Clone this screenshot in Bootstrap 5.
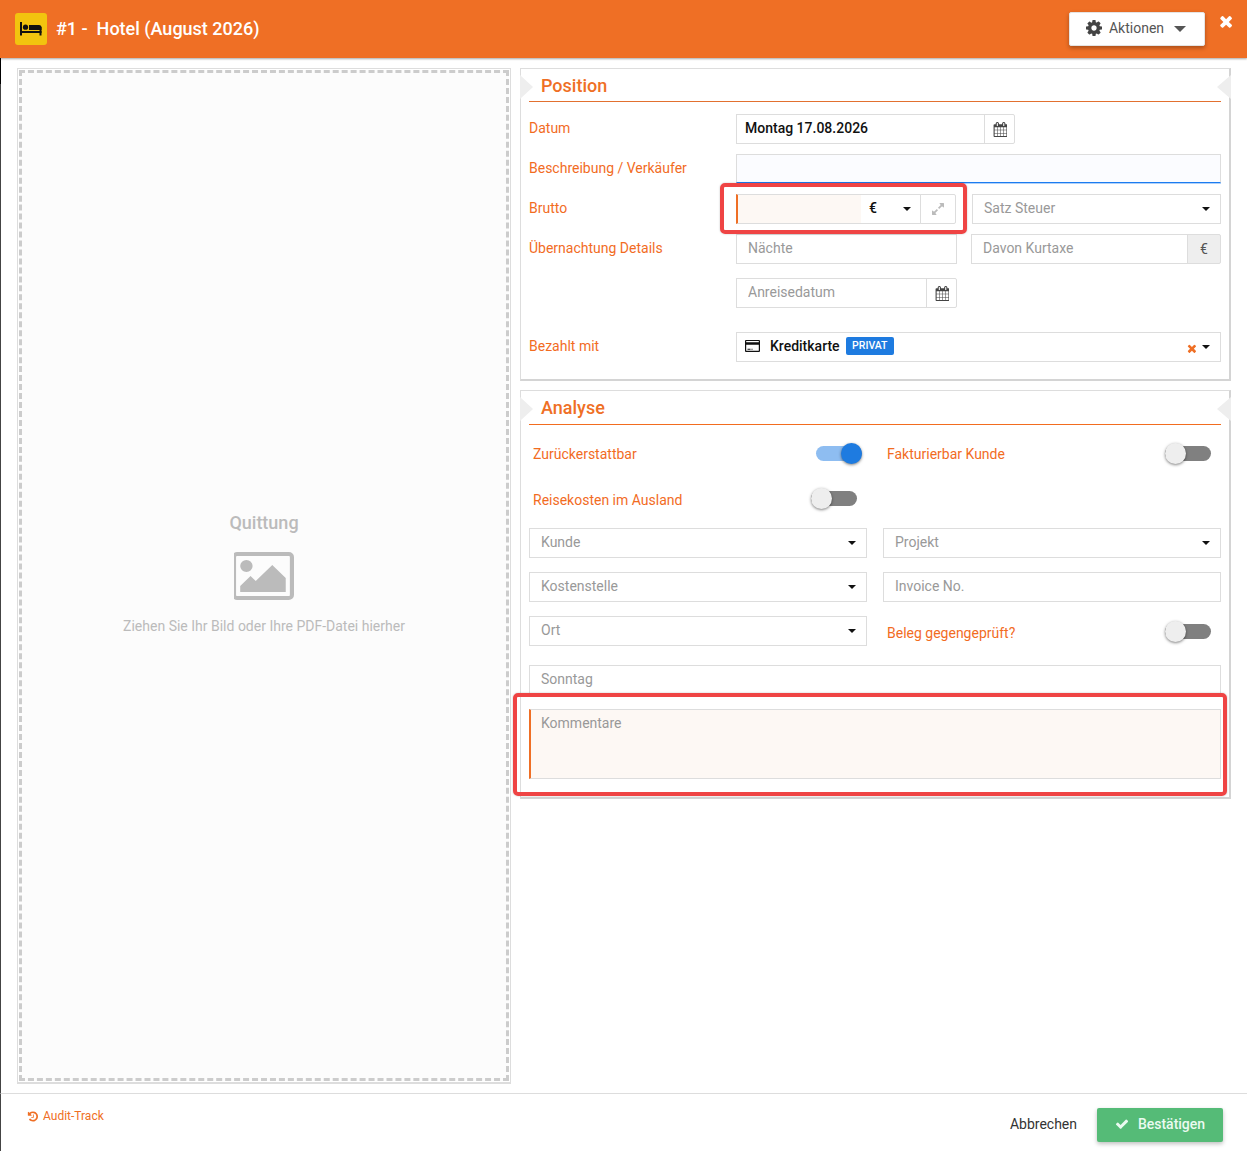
<!DOCTYPE html>
<html lang="de">
<head>
<meta charset="UTF-8" />
<title>Hotel</title>
<link rel="stylesheet" href="https://cdn.jsdelivr.net/npm/bootstrap@5.3.0/dist/css/bootstrap.min.css" />
<style>
body { font-family: Roboto, "Liberation Sans", sans-serif; font-size: 14px; color: #333; background: #fff; }
.top-bar { height: 58px; background: #ef6f25; color: #fff; box-shadow: 0 1px 2px rgba(0,0,0,.35); padding: 0 15px; z-index: 2; flex: none; }
.top-icon { width: 32px; height: 32px; background: #f2c40f; border-radius: 3px; }
.top-title { font-size: 18px; font-weight: 500; margin: 0 0 0 9px; white-space: pre; }
.action-btn { width: 136px; height: 34px; background: #fff; color: #555; font-size: 14px; border: 1px solid #e4e4e4; border-radius: 2px; box-shadow: 0 2px 4px rgba(0,0,0,.3); margin-left: auto; margin-right: 14px; gap: 7px; padding: 0 2px 2px 0; }
.action-caret { width: 0; height: 0; border-left: 6px solid transparent; border-right: 6px solid transparent; border-top: 6px solid #555; margin-left: 3px; margin-top: 2px; }
.close-x { margin: -15px 0 0 0; line-height: 0; }
.work { border-left: 1px solid #444; border-image: linear-gradient(#000 27px, #444 27px) 1; padding: 10px 16px 9px 16px; gap: 9px; min-height: 0; }
.drop-outer { width: 494px; flex: none; border: 1px solid #ddd; border-bottom-width: 2px; padding: 1px; }
.drop-zone { height: 100%; border: 3px dashed #ccc; background: #fcfcfc; color: #bbb; padding-bottom: 3px; }
.drop-title { font-size: 18px; font-weight: 500; line-height: 24px; margin-bottom: 17px; }
.drop-text { line-height: 21px; margin-top: 16px; }
.side { flex: 1 1 0; min-width: 0; gap: 9px; }
.pane { position: relative; border: 1px solid #ddd; border-right: 2px solid #d4d4d4; border-bottom: 2px solid #d4d4d4; padding: 0 8px; background: #fff; }
.pane::before, .pane::after { content: ""; position: absolute; top: 6px; width: 0; height: 0; border-top: 12px solid transparent; border-bottom: 12px solid transparent; }
.pane::before { left: -1px; border-left: 13px solid #eee; }
.pane::after { right: -2px; border-right: 14px solid #eee; }
.pane-title { height: 33px; border-bottom: 1px solid #e2702f; color: #ef6f25; font-size: 18px; font-weight: 500; line-height: 33px; padding-left: 12px; margin: 0; }
.pane-title.tall { height: 34px; line-height: 33px; border-bottom-color: #f26c1f; }
.pos-body { padding: 12px 0 17px; }
.ana-body { padding: 13px 0 18px; }
.line { min-height: 30px; margin-bottom: 10px; }
.line-wide { margin-bottom: 14px; }
.line-last { margin-bottom: 0; }
.lbl { color: #f26c1f; width: 207px; flex: none; padding-bottom: 2px; margin: 0; }
.lbl-text { color: #f26c1f; padding-top: 2px; }
.lbl-low { padding-top: 4px; }
.fld.form-control, .pick.btn { height: 30px; border: 1px solid #ddd; border-radius: 0; font-size: 14px; padding: 0 11px 2px; background-color: #fff; box-shadow: none; color: #111; }
.fld::placeholder { color: #999; opacity: 1; }
.pick.btn { color: #999; text-align: left; font-weight: 400; padding-right: 10px; }
.pick.dropdown-toggle::after { margin: 2px 0 0 auto; color: #111; }
.pick-strong.btn { padding: 0 10px 2px 8px; color: #111; font-weight: 500; gap: 6px; }
.pick-strong.dropdown-toggle::after { margin-left: 0; }
.val-date.form-control { padding-left: 8px; font-weight: 500; color: #111; }
.fld.form-control.desc-field { height: 29px; margin-bottom: 1px; background-color: #fbfcff; border-bottom: 1px solid #1b7cf0; box-shadow: 0 1px 0 rgba(27,124,240,.35); }
.marked.form-control { background-color: #fdf8f4; border-left: 2px solid #ef6f25; }
.add-on { height: 30px; width: 31px; padding: 0; justify-content: center; background: #fff; border: 1px solid #ddd; border-radius: 0 2px 2px 0; color: #444; font-size: 14px; }
.add-on.grey { width: 34px; background: #eee; color: #555; }
.cur-pick { width: 60px; height: 30px; padding: 0 9px 2px 8px; background: #fff; border: 1px solid #ddd; border-left: 0; border-radius: 0; font-size: 14px; font-weight: 500; color: #111; }
.cur-pick::after { margin: 2px 0 0 auto; }
.grow-btn { width: 36px; height: 30px; padding: 0; justify-content: center; background: #fff; border: 1px solid #ddd; border-radius: 0 2px 2px 0; }
.w-brutto { width: 220px; flex: none; }
.w-naechte { width: 221px; flex: none; }
.w-datum { width: 279px; }
.kurtaxe-gap { margin-left: 14px; }
.priv-tag.badge { background: #1e7be0; color: #fff; font-size: 10.5px; font-weight: 500; border-radius: 2px; padding: 3.500px 6.500px; margin-top: 2px; }
.half { width: calc(50% - 8px); flex: none; }
.tog-row { height: 30px; padding: 0 10px 0 4px; }
.tog-row.tog-on { padding-right: 5px; }
.tog-gap1 { margin-bottom: 16px; }
.tog-gap2 { margin-bottom: 14px; }
.slide { display: block; position: relative; width: 46px; height: 15px; border-radius: 8px; background: #808080; }
.slide::after { content: ""; position: absolute; top: -3px; left: 0; width: 21px; height: 21px; border-radius: 50%; background: #eee; box-shadow: 0 1px 3px rgba(0,0,0,.5); }
.slide.slide-on { background: #8ebdf1; }
.slide.slide-on::after { left: auto; right: 0; background: #1e7be0; }
.slide-up { margin-bottom: 2px; }
.note-wrap { position: relative; }
.note-box { position: absolute; border: 4px solid #ef4444; border-radius: 5px; pointer-events: none; box-shadow: 0 0 2px rgba(0,0,0,.25); z-index: 3; }
.note-brutto { left: -16px; right: -11px; top: -11px; bottom: -10px; }
.note-comment { left: -16px; right: -6px; top: -16px; bottom: -17px; }
.comment.form-control { display: block; height: 70px; border: 1px solid #ddd; border-left: 2px solid #ef6f25; border-radius: 0; background: #fdf8f4; font-size: 14px; padding: 3px 10px; box-shadow: none; resize: none; }
.comment::placeholder { color: #999; opacity: 1; }
.sun-field { margin: 19px 0 14px; }
.bottom-bar { height: 58px; flex: none; border-top: 1px solid #ddd; border-left: 1px solid #444; padding: 14px 24px 0 26px; }
.audit { color: #ef6f25; font-size: 12px; line-height: 17px; text-decoration: none; gap: 5px; }
.cancel-btn.btn { color: #333; font-size: 14px; border: 0; padding: 0 0 2px; margin-right: 20px; height: 34px; }
.ok-btn.btn { width: 126px; height: 34px; padding: 0 0 2px; background: #55bb77; color: #eafaf0; border: 0; border-radius: 2px; font-size: 14px; font-weight: 500; box-shadow: 0 2px 4px rgba(0,0,0,.25); gap: 9px; }
</style>
</head>
<body class="vh-100 d-flex flex-column overflow-hidden">

<header class="top-bar d-flex align-items-center">
    <span class="top-icon d-flex align-items-center justify-content-center">
        <svg width="22" height="14" viewBox="0 0 22 14" fill="#111"><rect x="0" y="0" width="2" height="13.5"/><rect x="0" y="9" width="21.5" height="2"/><rect x="19.5" y="5" width="2" height="8.5"/><circle cx="5.5" cy="5.2" r="2.6"/><path d="M9 3h10q2.500 0 2.500 2.500V8H9z"/></svg>
    </span>
    <h1 class="top-title">#1 -  Hotel (August 2026)</h1>
    <button type="button" class="btn action-btn d-flex align-items-center justify-content-center">
        <svg width="16" height="16" viewBox="128 128 1536 1536" fill="#444"><path d="M1152 896q0-106-75-181t-181-75-181 75-75 181 75 181 181 75 181-75 75-181zm512-109v222q0 12-8 23t-20 13l-185 28q-19 54-39 91 35 50 107 138 10 12 10 25t-9 23q-27 37-99 108t-94 71q-12 0-26-9l-138-108q-44 23-91 38-16 136-29 186-7 28-36 28h-222q-14 0-24.500-8.500t-11.500-21.500l-28-184q-49-16-90-37l-141 107q-10 9-25 9-14 0-25-11-126-114-165-168-7-10-7-23 0-12 8-23 15-21 51-66.500t54-70.500q-27-50-41-99l-183-27q-13-2-21-12.500t-8-23.500v-222q0-12 8-23t19-13l186-28q14-46 39-92-40-57-107-138-10-12-10-24 0-10 9-23 26-36 98.500-107.500t94.500-71.500q13 0 26 10l138 107q44-23 91-38 16-136 29-186 7-28 36-28h222q14 0 24.500 8.500t11.500 21.500l28 184q49 16 90 37l142-107q9-9 24-9 13 0 25 10 129 119 165 170 7 8 7 22 0 12-8 23-15 21-51 66.500t-54 70.500q26 50 41 98l183 28q13 2 21 12.500t8 23.500z"/></svg>
        Aktionen
        <span class="action-caret"></span>
    </button>
    <span class="close-x">
        <svg width="13" height="13" viewBox="180 260 1310 1310" fill="#fff"><path d="M1490 1322q0 40-28 68l-136 136q-28 28-68 28t-68-28l-294-294-294 294q-28 28-68 28t-68-28l-136-136q-28-28-28-68t28-68l294-294-294-294q-28-28-28-68t28-68l136-136q28-28 68-28t68 28l294 294 294-294q28-28 68-28t68 28l136 136q28 28 28 68t-28 68l-294 294 294 294q28 28 28 68z"/></svg>
    </span>
</header>

<main class="work flex-grow-1 d-flex">
    <div class="drop-outer">
        <div class="drop-zone d-flex flex-column align-items-center justify-content-center">
            <div class="drop-title">Quittung</div>
            <svg width="60" height="48" viewBox="0 128 1856 1536" preserveAspectRatio="none" fill="#bbb"><path d="M576 576q0 80-56 136t-136 56-136-56-56-136 56-136 136-56 136 56 56 136zm1024 384v448h-1408v-192l320-320 160 160 512-512zm96-704h-1600q-13 0-22.500 9.500t-9.500 22.500v1216q0 13 9.500 22.500t22.500 9.500h1600q13 0 22.500-9.500t9.500-22.500v-1216q0-13-9.500-22.500t-22.500-9.500zm160 32v1216q0 66-47 113t-113 47h-1600q-66 0-113-47t-47-113v-1216q0-66 47-113t113-47h1600q66 0 113 47t47 113z"/></svg>
            <div class="drop-text">Ziehen Sie Ihr Bild oder Ihre PDF-Datei hierher</div>
        </div>
    </div>

    <div class="side d-flex flex-column">
        <section class="pane">
            <h2 class="pane-title">Position</h2>
            <div class="pos-body">
                <div class="line d-flex align-items-center">
                    <label class="lbl">Datum</label>
                    <div class="input-group flex-nowrap w-datum">
                        <input type="text" class="form-control fld val-date" value="Montag 17.08.2026" />
                        <span class="input-group-text add-on">
                            <svg width="14" height="15" viewBox="0 0 1664 1792" fill="#444"><path d="M192 1664h288v-288h-288v288zm352 0h320v-288h-320v288zm-352-352h288v-320h-288v320zm352 0h320v-320h-320v320zm-352-384h288v-288h-288v288zm736 736h320v-288h-320v288zm-384-736h320v-288h-320v288zm768 736h288v-288h-288v288zm-384-352h320v-320h-320v320zm-352-864v-288q0-13-9.500-22.500t-22.500-9.500h-64q-13 0-22.500 9.500t-9.500 22.500v288q0 13 9.500 22.500t22.500 9.500h64q13 0 22.500-9.500t9.500-22.500zm736 864h288v-320h-288v320zm-384-384h320v-288h-320v288zm384 0h288v-288h-288v288zm32-480v-288q0-13-9.500-22.500t-22.500-9.500h-64q-13 0-22.500 9.500t-9.500 22.500v288q0 13 9.500 22.500t22.500 9.500h64q13 0 22.500-9.500t9.500-22.500zm384-64v1280q0 52-38 90t-90 38h-1408q-52 0-90-38t-38-90v-1280q0-52 38-90t90-38h128v-96q0-66 47-113t113-47h64q66 0 113 47t47 113v96h384v-96q0-66 47-113t113-47h64q66 0 113 47t47 113v96h128q52 0 90 38t38 90z"/></svg>
                        </span>
                    </div>
                </div>
                <div class="line d-flex align-items-center">
                    <label class="lbl">Beschreibung / Verkäufer</label>
                    <input type="text" class="form-control fld desc-field" />
                </div>
                <div class="line d-flex align-items-center">
                    <label class="lbl">Brutto</label>
                    <div class="w-brutto note-wrap">
                        <div class="input-group flex-nowrap">
                            <input type="text" class="form-control fld marked" />
                            <button type="button" class="btn dropdown-toggle cur-pick d-flex align-items-center">€</button>
                            <button type="button" class="btn grow-btn d-flex align-items-center">
                                <svg width="14" height="14" viewBox="0 0 1792 1792" fill="#bbb"><path d="M883 1056q0 13-10 23l-332 332 144 144q19 19 19 45t-19 45-45 19h-448q-26 0-45-19t-19-45v-448q0-26 19-45t45-19 45 19l144 144 332-332q10-10 23-10t23 10l114 114q10 10 10 23zm781-864v448q0 26-19 45t-45 19-45-19l-144-144-332 332q-10 10-23 10t-23-10l-114-114q-10-10-10-23t10-23l332-332-144-144q-19-19-19-45t19-45 45-19h448q26 0 45 19t19 45z"/></svg>
                            </button>
                        </div>
                        <div class="note-box note-brutto"></div>
                    </div>
                    <button type="button" class="btn pick dropdown-toggle d-flex align-items-center flex-grow-1 ms-3">Satz Steuer</button>
                </div>
                <div class="line line-wide d-flex align-items-center">
                    <label class="lbl">Übernachtung Details</label>
                    <input type="text" class="form-control fld w-naechte" placeholder="Nächte" />
                    <div class="input-group flex-nowrap kurtaxe-gap">
                        <input type="text" class="form-control fld" placeholder="Davon Kurtaxe" />
                        <span class="input-group-text add-on grey">€</span>
                    </div>
                </div>
                <div class="line d-flex align-items-center">
                    <span class="lbl"></span>
                    <div class="input-group flex-nowrap w-naechte">
                        <input type="text" class="form-control fld" placeholder="Anreisedatum" />
                        <span class="input-group-text add-on">
                            <svg width="14" height="15" viewBox="0 0 1664 1792" fill="#444"><path d="M192 1664h288v-288h-288v288zm352 0h320v-288h-320v288zm-352-352h288v-320h-288v320zm352 0h320v-320h-320v320zm-352-384h288v-288h-288v288zm736 736h320v-288h-320v288zm-384-736h320v-288h-320v288zm768 736h288v-288h-288v288zm-384-352h320v-320h-320v320zm-352-864v-288q0-13-9.500-22.500t-22.500-9.500h-64q-13 0-22.500 9.500t-9.500 22.500v288q0 13 9.500 22.500t22.500 9.500h64q13 0 22.500-9.500t9.500-22.500zm736 864h288v-320h-288v320zm-384-384h320v-288h-320v288zm384 0h288v-288h-288v288zm32-480v-288q0-13-9.500-22.500t-22.500-9.500h-64q-13 0-22.500 9.500t-9.500 22.500v288q0 13 9.500 22.500t22.500 9.500h64q13 0 22.500-9.500t9.500-22.500zm384-64v1280q0 52-38 90t-90 38h-1408q-52 0-90-38t-38-90v-1280q0-52 38-90t90-38h128v-96q0-66 47-113t113-47h64q66 0 113 47t47 113v96h384v-96q0-66 47-113t113-47h64q66 0 113 47t47 113v96h128q52 0 90 38t38 90z"/></svg>
                        </span>
                    </div>
                </div>
                <div class="line line-last d-flex align-items-center mt-4">
                    <label class="lbl">Bezahlt mit</label>
                    <button type="button" class="btn pick pick-strong dropdown-toggle d-flex align-items-center flex-grow-1">
                        <svg width="15" height="12" viewBox="0 0 15 12" class="me-1"><path fill="#111" fill-rule="evenodd" d="M1 0h13a1 1 0 0 1 1 1v10a1 1 0 0 1-1 1H1a1 1 0 0 1-1-1V1a1 1 0 0 1 1-1zm.2 1v1.200h12.600V1zm0 3.800v6h12.600v-6zM2.500 8.700h3v1h-3zm4 0h1v1h-1z"/></svg>
                        Kreditkarte
                        <span class="badge priv-tag">PRIVAT</span>
                        <svg width="9" height="9" viewBox="180 260 1310 1310" fill="#ef6f25" class="ms-auto mt-1"><path d="M1490 1322q0 40-28 68l-136 136q-28 28-68 28t-68-28l-294-294-294 294q-28 28-68 28t-68-28l-136-136q-28-28-28-68t28-68l294-294-294-294q-28-28-28-68t28-68l136-136q28-28 68-28t68 28l294 294 294-294q28-28 68-28t68 28l136 136q28 28 28 68t-28 68l-294 294 294 294q28 28 28 68z"/></svg>
                    </button>
                </div>
            </div>
        </section>

        <section class="pane">
            <h2 class="pane-title tall">Analyse</h2>
            <div class="ana-body">
                <div class="d-flex gap-3 tog-gap1">
                    <div class="half tog-row tog-on d-flex align-items-center justify-content-between">
                        <span class="lbl-text">Zurückerstattbar</span>
                        <span class="slide slide-on"></span>
                    </div>
                    <div class="half tog-row d-flex align-items-center justify-content-between">
                        <span class="lbl-text">Fakturierbar Kunde</span>
                        <span class="slide"></span>
                    </div>
                </div>
                <div class="d-flex gap-3 tog-gap2">
                    <div class="half tog-row d-flex align-items-center justify-content-between">
                        <span class="lbl-text">Reisekosten im Ausland</span>
                        <span class="slide slide-up"></span>
                    </div>
                </div>
                <div class="d-flex gap-3 line line-wide">
                    <button type="button" class="btn pick dropdown-toggle half d-flex align-items-center">Kunde</button>
                    <button type="button" class="btn pick dropdown-toggle half d-flex align-items-center">Projekt</button>
                </div>
                <div class="d-flex gap-3 line line-wide">
                    <button type="button" class="btn pick dropdown-toggle half d-flex align-items-center">Kostenstelle</button>
                    <input type="text" class="form-control fld half" placeholder="Invoice No." />
                </div>
                <div class="d-flex gap-3 line line-last">
                    <button type="button" class="btn pick dropdown-toggle half d-flex align-items-center">Ort</button>
                    <div class="half tog-row d-flex align-items-center justify-content-between">
                        <span class="lbl-text lbl-low">Beleg gegengeprüft?</span>
                        <span class="slide"></span>
                    </div>
                </div>
                <div class="sun-field">
                    <input type="text" class="form-control fld" placeholder="Sonntag" />
                </div>
                <div class="note-wrap">
                    <textarea class="form-control comment" placeholder="Kommentare"></textarea>
                    <div class="note-box note-comment"></div>
                </div>
            </div>
        </section>
    </div>
</main>

<footer class="bottom-bar d-flex justify-content-between align-items-start">
    <a href="#" class="audit d-flex align-items-center">
        <svg width="11" height="11" viewBox="0 128 1664 1536" fill="#ef6f25"><path d="M1664 896q0 156-61 298t-164 245-245 164-298 61q-172 0-327-72.500t-264-204.500q-7-10-6.500-22.500t8.500-20.500l137-138q10-9 25-9 16 2 23 12 73 95 179 147t225 52q104 0 198.500-40.500t163.500-109.500 109.500-163.500 40.500-198.500-40.500-198.500-109.500-163.500-163.500-109.500-198.500-40.500q-98 0-188 35.500t-160 101.500l137 138q31 30 14 69-17 40-59 40h-448q-26 0-45-19t-19-45v-448q0-42 40-59 39-17 69 14l130 129q107-101 244.500-156.500t284.500-55.500q156 0 298 61t245 164 164 245 61 298zm-640-288v448q0 14-9 23t-23 9h-320q-14 0-23-9t-9-23v-64q0-14 9-23t23-9h224v-352q0-14 9-23t23-9h64q14 0 23 9t9 23z"/></svg>
        Audit-Track
    </a>
    <div class="d-flex align-items-center">
        <button type="button" class="btn cancel-btn">Abbrechen</button>
        <button type="button" class="btn ok-btn d-flex align-items-center justify-content-center">
            <svg width="14" height="14" viewBox="0 200 1792 1400" fill="#eafaf0"><path d="M1671 566q0 40-28 68l-724 724-136 136q-28 28-68 28t-68-28l-136-136-362-362q-28-28-28-68t28-68l136-136q28-28 68-28t68 28l294 295 656-657q28-28 68-28t68 28l136 136q28 28 28 68z"/></svg>
            Bestätigen
        </button>
    </div>
</footer>

<script src="https://cdn.jsdelivr.net/npm/bootstrap@5.3.0/dist/js/bootstrap.bundle.min.js"></script>
</body>
</html>
